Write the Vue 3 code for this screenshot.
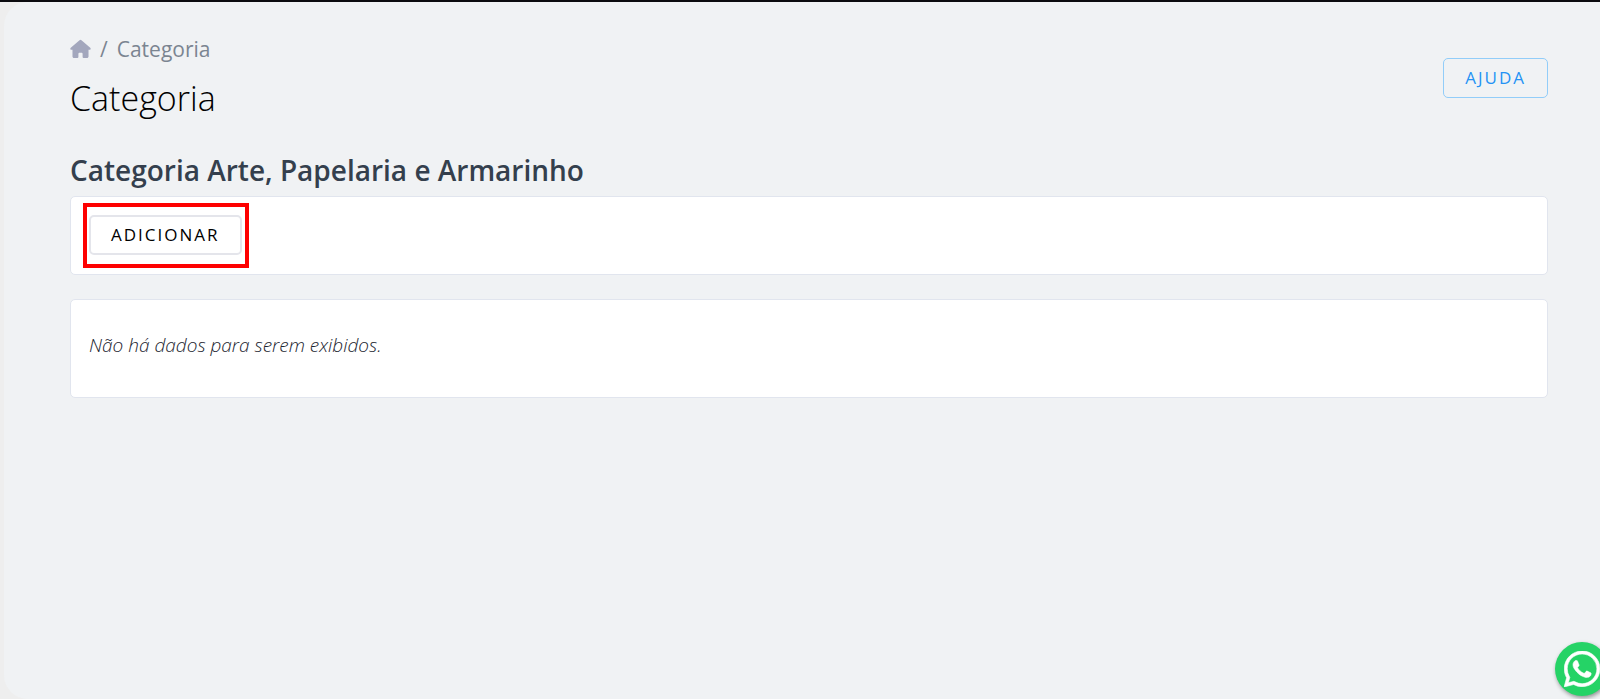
<template>
    <div class="shell">
        <main class="page">
            <header class="page-header">
                <div>
                    <nav class="breadcrumb" aria-label="Navegação">
                        <a href="#" class="home" aria-label="Início">
                            <svg viewBox="0 0 22 20" width="21" height="20">
                                <path
                                    d="M10 .8a1.6 1.6 0 0 1 2 0l9.200 8c.9.8.4 2-.6 2h-1.200v7.100c0 .9-.7 1.600-1.600 1.600h-3.600c-.6 0-1-.4-1-1V15c0-.7-.5-1.200-1.200-1.200h-2c-.7 0-1.200.5-1.200 1.200v3.500c0 .6-.4 1-1 1H4.200c-.9 0-1.600-.7-1.600-1.600v-7.100H1.400c-1 0-1.500-1.200-.6-2z"
                                />
                            </svg>
                        </a>
                        <span>/</span>
                        <span>{{ title }}</span>
                    </nav>
                    <h1>{{ title }}</h1>
                </div>
                <button type="button" class="btn btn-help">AJUDA</button>
            </header>

            <h2>{{ title }} {{ category }}</h2>

            <section class="card toolbar">
                <div class="highlight">
                    <button type="button" class="btn btn-add" @click="addItem">
                        ADICIONAR
                    </button>
                </div>
            </section>

            <section class="card list">
                <p v-if="items.length === 0">Não há dados para serem exibidos.</p>
                <p v-for="item in items" :key="item">{{ item }}</p>
            </section>
        </main>

        <a href="#" class="whatsapp" aria-label="WhatsApp">
            <svg viewBox="0 0 24 24" width="36" height="36">
                <path
                    d="M17.472 14.382c-.297-.149-1.758-.867-2.030-.967-.273-.099-.471-.148-.67.150-.197.297-.767.966-.940 1.164-.173.199-.347.223-.644.075-.297-.150-1.255-.463-2.390-1.475-.883-.788-1.480-1.761-1.653-2.059-.173-.297-.018-.458.130-.606.134-.133.298-.347.446-.520.149-.174.198-.298.298-.497.099-.198.050-.371-.025-.520-.075-.149-.669-1.612-.916-2.207-.242-.579-.487-.5-.669-.51-.173-.008-.371-.010-.570-.010-.198 0-.520.074-.792.372-.272.297-1.040 1.016-1.040 2.479 0 1.462 1.065 2.875 1.213 3.074.149.198 2.096 3.200 5.077 4.487.709.306 1.262.489 1.694.625.712.227 1.360.195 1.871.118.571-.085 1.758-.719 2.006-1.413.248-.694.248-1.289.173-1.413-.074-.124-.272-.198-.570-.347m-5.421 7.403h-.004a9.870 9.870 0 0 1-5.031-1.378l-.361-.214-3.741.982.998-3.648-.235-.374a9.860 9.860 0 0 1-1.510-5.260c.001-5.450 4.436-9.884 9.888-9.884 2.640 0 5.122 1.030 6.988 2.898a9.825 9.825 0 0 1 2.893 6.994c-.003 5.450-4.437 9.884-9.885 9.884m8.413-18.297A11.815 11.815 0 0 0 12.050 0C5.495 0 .160 5.335.157 11.892c0 2.096.547 4.142 1.588 5.945L.057 24l6.305-1.654a11.882 11.882 0 0 0 5.683 1.448h.005c6.554 0 11.890-5.335 11.893-11.893a11.821 11.821 0 0 0-3.480-8.413Z"
                />
            </svg>
        </a>
    </div>
</template>

<script setup>
import { ref } from "vue";

const title = "Categoria";
const category = "Arte, Papelaria e Armarinho";
const items = ref([]);

const addItem = () => {
    items.value.push(`${title} ${items.value.length + 1}`);
};
</script>

<style>
body {
    background: #eeeeee;
}
</style>

<style scoped>
.shell {
    box-sizing: border-box;
    min-height: 100vh;
    display: flex;
    border-top: 2px solid #0b0b0f;
    padding-left: 4px;
    overflow: hidden;
    font-family: "Open Sans", sans-serif;
    color: #343f4d;
}
.page {
    flex: 1;
    box-sizing: border-box;
    padding: 32px 52px 32px 66px;
    background: #f0f2f4;
    border-radius: 24px 0 0 24px;
}
.page-header {
    display: flex;
    justify-content: space-between;
    align-items: flex-start;
}
.breadcrumb {
    display: flex;
    align-items: center;
    gap: 9px;
    font-size: 21px;
    line-height: 30px;
    color: #7b8591;
}
.home {
    display: flex;
}
.home svg {
    fill: #a3a7bd;
}
h1 {
    margin: 12px 0 0;
    font-size: 34px;
    line-height: 44px;
    font-weight: 300;
    color: #000;
}
h2 {
    margin: 29px 0 5px;
    font-size: 28px;
    line-height: 42px;
    font-weight: 600;
}
.btn {
    box-sizing: border-box;
    height: 40px;
    padding: 0 21px 2px;
    border: 1px solid;
    border-radius: 5px;
    background: transparent;
    font-family: inherit;
    font-size: 17px;
    letter-spacing: 2px;
    cursor: pointer;
}
.btn-help {
    margin-top: 24px;
    border-color: #92cdf9;
    color: #2492f5;
}
.btn-add {
    padding: 0 20px 2px;
    border: 2px solid #e4e5eb;
    background: #fff;
    color: #000;
}
.card {
    box-sizing: border-box;
    border: 1px solid #e1e5ee;
    border-radius: 5px;
    background: #fff;
}
.toolbar {
    display: flex;
    padding: 6px 12px;
}
.highlight {
    padding: 8px 3px 9px 2px;
    border: 4px solid #fe0000;
}
.highlight .btn {
    display: block;
}
.list {
    margin-top: 24px;
    padding: 30px 18px 37px;
}
.list p {
    margin: 0;
    font-size: 19px;
    line-height: 30px;
    font-weight: 300;
    font-style: italic;
    color: #1c2530;
}
.whatsapp {
    position: fixed;
    right: -9px;
    bottom: 3px;
    width: 54px;
    height: 54px;
    display: flex;
    align-items: center;
    justify-content: center;
    border-radius: 50%;
    background: #25d366;
    box-shadow: 1px 2px 4px rgba(0, 0, 0, 0.4);
}
.whatsapp svg {
    fill: #fff;
    stroke: #fff;
    stroke-width: 0.4;
}
</style>
